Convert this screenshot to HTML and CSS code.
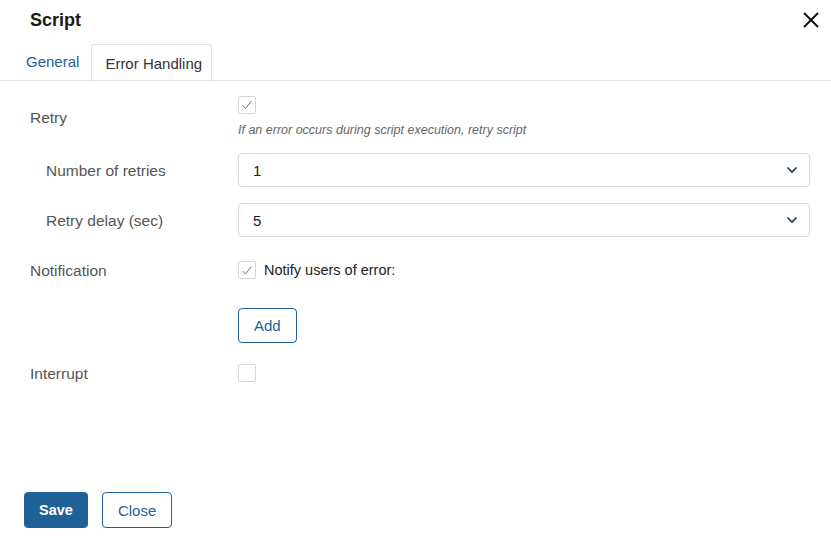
FILE: index.html
```html
<!DOCTYPE html>
<html>

<head>
  <title>Script</title>
  <link rel="stylesheet" href="styles.css">
</head>

<body>
  <div class="dialog">
    <div class="dialog-header">
      <div class="dialog-title">Script</div>
      <button class="close-x" title="Close">
        <svg width="18" height="18" viewBox="0 0 18 18">
          <path d="M2 2 L16 16 M16 2 L2 16" stroke="#111" stroke-width="2" fill="none" />
        </svg>
      </button>
    </div>

    <div class="tabs">
      <div class="tab">General</div>
      <div class="tab tab-active">Error Handling</div>
    </div>

    <div class="form">
      <div class="row row-retry">
        <div class="label">Retry</div>
        <div class="field">
          <span class="checkbox checked">
            <svg width="16" height="16" viewBox="0 0 16 16">
              <polyline points="3.5,8.5 6.5,11.5 12.5,4" stroke="#5577aa" stroke-width="1" fill="none" />
            </svg>
          </span>
          <div class="hint">If an error occurs during script execution, retry script</div>
        </div>
      </div>

      <div class="row row-select">
        <div class="label label-sub">Number of retries</div>
        <div class="select">
          <span>1</span>
          <svg width="12" height="8" viewBox="0 0 12 8">
            <polyline points="1.5,1.5 6,6 10.5,1.5" stroke="#1f3650" stroke-width="1.6" fill="none" />
          </svg>
        </div>
      </div>

      <div class="row row-select2">
        <div class="label label-sub">Retry delay (sec)</div>
        <div class="select">
          <span>5</span>
          <svg width="12" height="8" viewBox="0 0 12 8">
            <polyline points="1.5,1.5 6,6 10.5,1.5" stroke="#1f3650" stroke-width="1.6" fill="none" />
          </svg>
        </div>
      </div>

      <div class="row row-notify">
        <div class="label">Notification</div>
        <div class="field-inline">
          <span class="checkbox checked">
            <svg width="16" height="16" viewBox="0 0 16 16">
              <polyline points="3.5,9 6.5,12 12.5,4.5" stroke="#5577aa" stroke-width="1" fill="none" />
            </svg>
          </span>
          <span class="check-text">Notify users of error:</span>
        </div>
      </div>

      <div class="row row-add">
        <div></div>
        <div><button class="btn btn-outline btn-add">Add</button></div>
      </div>

      <div class="row row-interrupt">
        <div class="label">Interrupt</div>
        <div class="field-inline">
          <span class="checkbox"></span>
        </div>
      </div>
    </div>

    <div class="footer">
      <button class="btn btn-primary">Save</button>
      <button class="btn btn-outline">Close</button>
    </div>
  </div>
</body>

</html>
```

FILE: styles.css
```css
html,
body {
  margin: 0;
  height: 100%;
  background: #ffffff;
}

body {
  font-family: "Liberation Sans", Arial, sans-serif;
  font-size: 15px;
  color: #222222;
}

.dialog {
  height: 100%;
  display: flex;
  flex-direction: column;
}

.dialog-header {
  height: 40px;
  padding: 0 11px 0 30px;
  display: flex;
  align-items: center;
  justify-content: space-between;
}

.dialog-title {
  font-size: 18px;
  font-weight: 600;
  color: #1a1a1a;
}

.close-x {
  border: none;
  background: none;
  padding: 0;
  width: 18px;
  height: 18px;
  cursor: pointer;
}

.tabs {
  margin-top: 4px;
  padding-left: 14px;
  display: flex;
  border-bottom: 1px solid #e2e2e2;
  height: 36px;
}

.tab {
  padding: 0 12px;
  line-height: 36px;
  color: #1f6196;
  margin-bottom: -1px;
}

.tab-active {
  padding: 0 9px 0 13px;
  color: #333333;
  border: 1px solid #e2e2e2;
  border-bottom: 1px solid #ffffff;
  border-radius: 3px 3px 0 0;
  line-height: 38px;
  height: 36px;
}

.form {
  padding: 15px 21px 0 30px;
}

.row {
  display: grid;
  grid-template-columns: 208px 1fr;
  align-items: center;
}

.label {
  color: #555555;
  font-size: 15.5px;
  padding-top: 2px;
}

.label-sub {
  padding-left: 16px;
}

.field {
  display: flex;
  flex-direction: column;
  gap: 8px;
}

.hint {
  font-size: 12.5px;
  font-style: italic;
  line-height: 16px;
  color: #666666;
}

.checkbox {
  display: inline-flex;
  align-items: center;
  justify-content: center;
  box-sizing: border-box;
  width: 18px;
  height: 18px;
  border: 1px solid #d6d6d6;
  border-radius: 2px;
  background: #ffffff;
}

.field-inline {
  height: 34px;
  display: flex;
  align-items: center;
  gap: 8px;
}

.check-text {
  color: #222222;
  font-size: 14.5px;
}

.row-select {
  margin-top: 15px;
}

.row-select2 {
  margin-top: 16px;
}

.row-notify {
  margin-top: 16px;
}

.row-add {
  margin-top: 21px;
}

.row-interrupt {
  margin-top: 13px;
}

.select {
  box-sizing: border-box;
  height: 34px;
  border: 1px solid #d9d9d9;
  border-radius: 4px;
  padding: 0 11px 0 14px;
  display: flex;
  align-items: center;
  justify-content: space-between;
  color: #222222;
}

.btn {
  box-sizing: border-box;
  font-family: "Liberation Sans", Arial, sans-serif;
  font-size: 15px;
  border-radius: 4px;
  cursor: pointer;
  height: 36px;
}

.btn-outline {
  background: #ffffff;
  color: #1f6196;
  border: 1px solid #1f6196;
  padding: 0 15px;
}

.btn-add {
  height: 35px;
}

.btn-primary {
  background: #1f6196;
  color: #ffffff;
  border: 1px solid #1f6196;
  font-weight: bold;
  font-size: 14.5px;
  padding: 0 14px;
  margin-right: 14px;
}

.footer {
  margin-top: auto;
  padding: 0 0 25px 24px;
  display: flex;
}
```
